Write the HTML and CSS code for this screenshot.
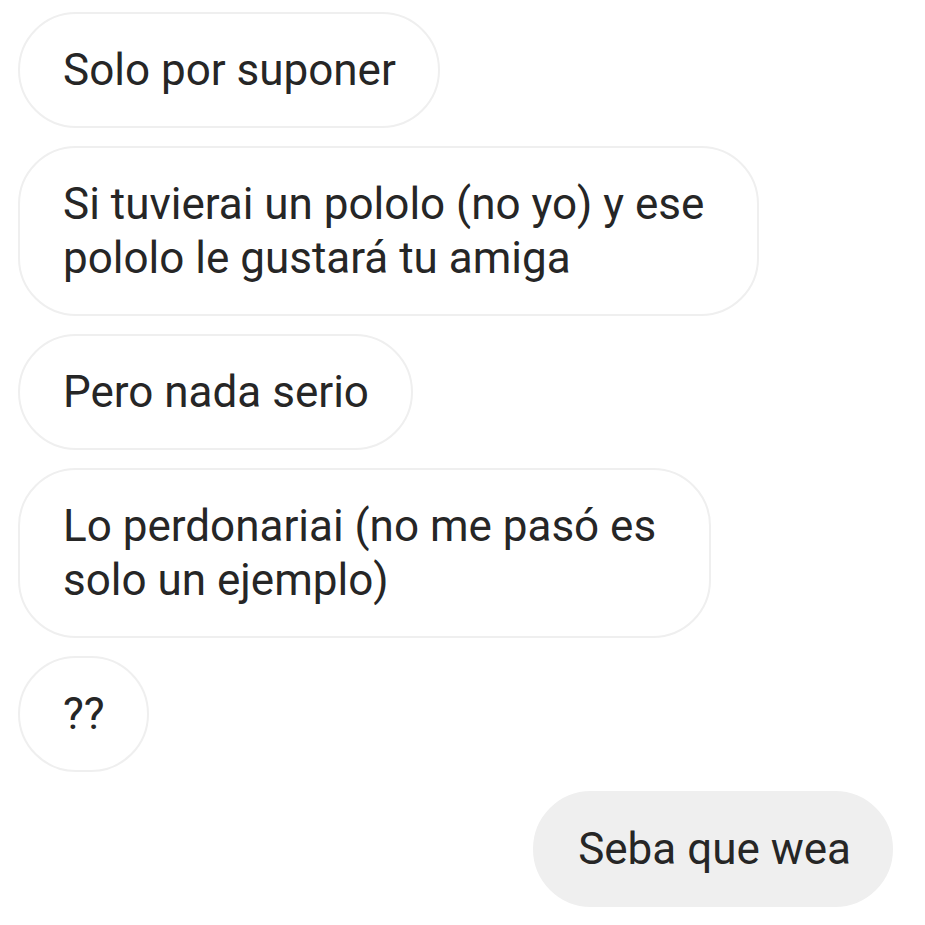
FILE: index.html
```html
<!DOCTYPE html>
<html lang="es">
<head>
<meta charset="utf-8">
<link rel="stylesheet" href="styles.css">
</head>
<body>
<div class="thread">
  <div class="msg in">Solo por suponer</div>
  <div class="msg in multi">Si tuvierai un pololo (no yo) y ese<br>pololo le gustará tu amiga</div>
  <div class="msg in">Pero nada serio</div>
  <div class="msg in multi">Lo perdonariai (no me pasó es<br>solo un ejemplo)</div>
  <div class="msg in">??</div>
  <div class="msg out">Seba que wea</div>
</div>
</body>
</html>
```
FILE: styles.css
```css
html, body {
  margin: 0;
  padding: 0;
  background: #ffffff;
}
.thread {
  display: flex;
  flex-direction: column;
  align-items: flex-start;
  gap: 18px;
  padding: 12px 32px 0 18px;
  font-family: Roboto, "Noto Sans", sans-serif;
  font-size: 44px;
  line-height: 54px;
  color: #262626;
}
.msg {
  box-sizing: border-box;
  white-space: nowrap;
  padding: 29px 42px 29px 43px;
  border: 2px solid #efefef;
  border-radius: 58px;
  background: #ffffff;
}
.msg.multi {
  padding-right: 53px;
}
.msg.out {
  align-self: flex-end;
  margin-top: 1px;
  padding-right: 40px;
  background: #efefef;
  border-color: #efefef;
}
```
